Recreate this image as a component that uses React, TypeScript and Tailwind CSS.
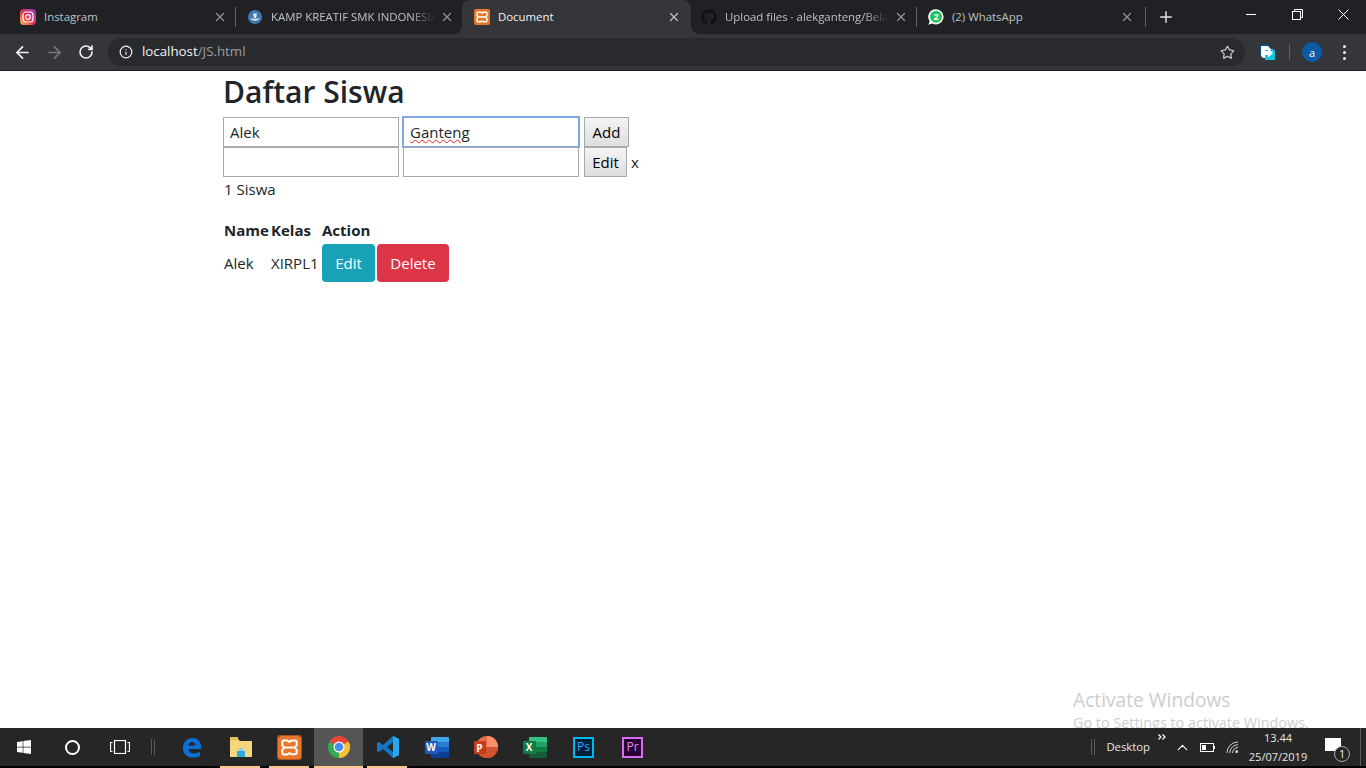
import { ArrowLeft, ArrowRight, RotateCw, Info, Star, X, Plus, ChevronUp } from "lucide-react";
import { FaGithub, FaWindows } from "react-icons/fa";

const Xampp = ({ size = 16 }: { size?: number }) => (
  <svg width={size} height={size} viewBox="0 0 16 16">
    <rect width="16" height="16" rx="2" fill="#e9772b" />
    <path
      d="M4 3.200h2.600l1.400.9 1.400-.9H12c.6 0 1 .4 1 1v2.200c0 .6-1.200 1-1.200 1.600s1.200 1 1.200 1.600v2.100c0 .6-.4 1-1 1H9.400L8 11.900l-1.400.9H4c-.6 0-1-.4-1-1V9.600C3 9 4.200 8.600 4.200 8S3 7 3 6.400V4.200c0-.6.4-1 1-1zM4.200 8h7.600"
      fill="none"
      stroke="#fff"
      strokeWidth="1.400"
      strokeLinejoin="round"
    />
  </svg>
);

const Tab = ({ title, icon, active, fade, left = 11, right = 8 }: { title: string; icon: React.ReactNode; active?: boolean; fade?: boolean; left?: number; right?: number }) => (
  <div
    className={`relative flex h-[34px] w-full items-center ${active ? "rounded-t-lg bg-[#35363a] text-[#f1f3f4]" : "text-[#bdc1c6]"}`}
    style={{ paddingLeft: left, paddingRight: right }}
  >
    {active && <div className="absolute bottom-0 -left-[8px] h-[8px] w-[8px] bg-[radial-gradient(circle_at_0_0,transparent_7.5px,#35363a_8px)]" />}
    {active && <div className="absolute bottom-0 -right-[8px] h-[8px] w-[8px] bg-[radial-gradient(circle_at_100%_0,transparent_7.5px,#35363a_8px)]" />}
    <div className="flex w-[16px] shrink-0 items-center justify-center">{icon}</div>
    <div className={`ml-[8px] w-[164px] overflow-hidden whitespace-nowrap text-[11.4px] leading-[16px] ${fade ? "[mask-image:linear-gradient(to_right,black_85%,transparent)]" : ""}`}>
      {title}
    </div>
    <X size={14} strokeWidth={2.2} className={`ml-auto shrink-0 ${active ? "text-[#bdc1c6]" : "text-[#8f9296]"}`} />
  </div>
);

const Sep = () => <div className="h-[20px] w-px shrink-0 bg-[#5f6368]" />;

function TabStrip() {
  return (
    <div className="flex h-[34px] items-center bg-[#202124]">
      <div className="w-[235px]">
        <Tab
          title="Instagram"
          left={20}
          icon={
            <svg width="16" height="16" viewBox="0 0 16 16">
              <defs>
                <linearGradient id="ig" x1="0" y1="1" x2="1" y2="0">
                  <stop offset="0" stopColor="#fdc04f" />
                  <stop offset="0.45" stopColor="#e8344f" />
                  <stop offset="1" stopColor="#8f3bc4" />
                </linearGradient>
              </defs>
              <rect width="16" height="16" rx="4" fill="url(#ig)" />
              <rect x="3" y="3" width="10" height="10" rx="3" fill="none" stroke="#fff" strokeWidth="1.2" />
              <circle cx="8" cy="8" r="2.3" fill="none" stroke="#fff" strokeWidth="1.2" />
            </svg>
          }
        />
      </div>
      <Sep />
      <div className="w-[226px]">
        <Tab
          title="KAMP KREATIF SMK INDONESIA"
          fade
          icon={
            <svg width="16" height="16" viewBox="0 0 16 16">
              <circle cx="8" cy="8" r="7" fill="#3f79b5" />
              <path d="M3.500 9c1 3.500 8 3.500 9 0l-2.500.7H6z" fill="#e6e6e6" />
              <path d="M6 4.500h4l-1 4.500H7z" fill="#dfe6ee" />
            </svg>
          }
        />
      </div>
      <div className="w-[229px]">
        <Tab title="Document" active left={12} right={10} icon={<Xampp />} />
      </div>
      <div className="w-[225px]">
        <Tab title="Upload files · alekganteng/Belajar" fade left={10} icon={<FaGithub size={16} className="text-[#111214]" />} />
      </div>
      <Sep />
      <div className="w-[228px]">
        <Tab
          title="(2) WhatsApp"
          right={11}
          icon={
            <svg width="16" height="16" viewBox="0 0 16 16">
              <path d="M8 .2a7.600 7.600 0 1 1-3.800 14.200L.4 15.800l1.300-3.600A7.600 7.600 0 0 1 8 .2z" fill="#fff" />
              <circle cx="8" cy="7.800" r="6" fill="#25c15f" />
              <text x="8" y="11" textAnchor="middle" fontSize="9" fontWeight="700" fill="#fff">
                2
              </text>
            </svg>
          }
        />
      </div>
      <Sep />
      <div className="flex h-[34px] w-[39px] items-center justify-center">
        <Plus size={18} strokeWidth={2} className="text-[#dee1e6]" />
      </div>
      <div className="ml-auto flex self-start text-white">
        <div className="flex h-[28px] w-[46px] items-center justify-center">
          <div className="h-px w-[10px] bg-white" />
        </div>
        <div className="flex h-[28px] w-[46px] items-center justify-center">
          <svg width="11" height="11" viewBox="0 0 11 11" fill="none" stroke="#fff">
            <rect x="0.5" y="2.5" width="8" height="8" />
            <path d="M2.500 2.500v-2h8v8h-2" />
          </svg>
        </div>
        <div className="flex h-[28px] w-[46px] items-center justify-center">
          <svg width="11" height="11" viewBox="0 0 11 11" stroke="#fff">
            <path d="M0.500 0.500l10 10M10.500 0.500l-10 10" />
          </svg>
        </div>
      </div>
    </div>
  );
}

function Toolbar() {
  return (
    <div className="flex h-[37px] items-center border-b border-[#1b1c1e] bg-[#35363a]">
      <div className="flex w-[108px] items-center pl-[13px]">
        <ArrowLeft size={19} strokeWidth={2.2} className="text-[#f1f3f4]" />
        <ArrowRight size={19} strokeWidth={2.2} className="ml-[13px] text-[#75787c]" />
        <RotateCw size={16} strokeWidth={2.4} className="ml-[14px] text-[#f1f3f4]" />
      </div>
      <div className="flex h-[28px] w-[1137px] items-center rounded-full bg-[#292a2d] pl-[11px] pr-[10px]">
        <Info size={14} strokeWidth={2} className="text-[#f1f3f4]" />
        <div className="ml-[9px] text-[13.3px] leading-none text-[#9aa0a6]">
          <span className="text-[#f1f3f4]">localhost</span>/JS.html
        </div>
        <Star size={15} strokeWidth={2} className="ml-auto text-[#c4c7c9]" />
      </div>
      <svg width="15" height="16" viewBox="0 0 15 16" className="ml-[15px]">
        <path d="M0 0h9v3H2v9H0z" fill="#0a4f7e" />
        <path d="M5 5h8l2 2v9H5z" fill="#14c4e4" />
        <path d="M1 2h7l3 3v1H5v8H3l-2-2z" fill="#fff" />
        <path d="M3 7h5V4.500L13 9l-5 4.500V11H3z" fill="#fff" />
      </svg>
      <div className="ml-[14px] h-[16px] w-px bg-[#5f6368]" />
      <div className="ml-[12px] flex h-[20px] w-[20px] items-center justify-center rounded-full bg-[#0b5aa5] text-[11px] leading-none text-white">
        a
      </div>
      <div className="ml-[21px] flex flex-col gap-[3px]">
        <div className="h-[3px] w-[3px] rounded-full bg-[#f1f3f4]" />
        <div className="h-[3px] w-[3px] rounded-full bg-[#f1f3f4]" />
        <div className="h-[3px] w-[3px] rounded-full bg-[#f1f3f4]" />
      </div>
    </div>
  );
}

function Page() {
  return (
    <main className="relative flex-1 overflow-hidden bg-white pl-[223px] text-[15px] text-[#212529]">
      <h1 className="h-[46px] pt-[1px] text-[30px] font-semibold leading-[40px]">Daftar Siswa</h1>
      <div className="flex h-[30px] items-center">
        <div className="flex h-[30px] w-[176px] items-center border border-[#a9a9a9] px-[6px]">Alek</div>
        <div className="ml-[4px] flex h-[30px] w-[176px] items-center border border-[#7ea6ea] px-[6px] shadow-[0_0_0_1px_#7ea6ea]">
          <span className="underline decoration-wavy decoration-[#e02020] decoration-1">Ganteng</span>
        </div>
        <button className="ml-[5px] h-[30px] w-[45px] border border-[#a9a9a9] bg-gradient-to-b from-[#f4f4f4] to-[#dedede] text-black">Add</button>
      </div>
      <div className="flex h-[30px] items-center">
        <div className="h-[30px] w-[176px] border border-[#a9a9a9]" />
        <div className="ml-[4px] h-[30px] w-[176px] border border-[#a9a9a9]" />
        <button className="ml-[5px] h-[30px] w-[43px] border border-[#a9a9a9] bg-gradient-to-b from-[#f4f4f4] to-[#dedede] text-black">Edit</button>
        <span className="ml-[4px]">x</span>
      </div>
      <p className="mt-[1px] pl-[1px] leading-[22px]">1 Siswa</p>
      <table className="mt-[16px]">
        <thead>
          <tr className="h-[28px] text-left font-bold">
            <th className="w-[47px] pl-[1px]">Name</th>
            <th className="w-[52px] pl-[1px]">Kelas</th>
            <th>Action</th>
          </tr>
        </thead>
        <tbody>
          <tr>
            <td className="pl-[1px]">Alek</td>
            <td className="pl-[1px]">XIRPL1</td>
            <td className="whitespace-nowrap">
              <div className="flex gap-[2px]">
                <button className="h-[38px] w-[53px] rounded-[4px] bg-[#17a2b8] text-white">Edit</button>
                <button className="h-[38px] w-[72px] rounded-[4px] bg-[#dc3545] text-white">Delete</button>
              </div>
            </td>
          </tr>
        </tbody>
      </table>
      <div className="absolute left-[1073px] top-[616px] whitespace-nowrap text-[#cdcdcd]">
        <div className="text-[19.2px] leading-[26px]">Activate Windows</div>
        <div className="text-[14.4px] leading-[20px]">Go to Settings to activate Windows.</div>
      </div>
    </main>
  );
}

const AppSlot = ({ children, open, active }: { children: React.ReactNode; open?: boolean; active?: boolean }) => (
  <div className={`relative flex h-[38px] w-[49px] items-center justify-center ${active ? "bg-[#555555]" : ""}`}>
    {children}
    {open && <div className={`absolute bottom-[-2px] h-[2px] bg-[#f6c78f] ${active ? "left-0 right-0" : "left-[4px] w-[40px]"}`} />}
  </div>
);

const Office = ({ letter, box, stripes }: { letter: string; box: string; stripes: string[] }) => (
  <div className="relative h-[21px] w-[24px]">
    <div className="absolute right-0 top-0 flex h-[21px] w-[18px] flex-col overflow-hidden rounded-[1px]">
      {stripes.map((c) => (
        <div key={c} className="flex-1" style={{ background: c }} />
      ))}
    </div>
    <div className="absolute left-0 top-[4px] flex h-[13px] w-[13px] items-center justify-center rounded-[1px] text-[10px] font-bold leading-none text-white" style={{ background: box }}>
      {letter}
    </div>
  </div>
);

function Taskbar() {
  return (
    <div className="h-[40px] bg-black">
      <div className="flex h-[38px] items-center bg-[#262626] text-white">
        <div className="flex w-[48px] justify-center">
          <FaWindows size={16} />
        </div>
        <div className="flex w-[48px] justify-center">
          <div className="h-[15px] w-[15px] rounded-full border-2 border-white" />
        </div>
        <div className="flex w-[48px] justify-center">
          <svg width="20" height="14" viewBox="0 0 20 14" fill="none" stroke="#fff" strokeWidth="1.2">
            <rect x="4.500" y="0.5" width="11" height="13" />
            <path d="M2.500 2.500H.5v9h2M17.500 2.500h2v9h-2" />
          </svg>
        </div>
        <div className="ml-[7px] mr-[12px] flex gap-[2px]">
          <div className="h-[16px] w-px bg-[#5a5a5a]" />
          <div className="h-[16px] w-px bg-[#5a5a5a]" />
        </div>
        <AppSlot>
          <svg width="22" height="22" viewBox="0 0 22 22">
            <path d="M2 12C2 6 6 2 12 2c5 0 8 4 8 9v2H7.500c.3 3 2.700 4.500 5.500 4.500 2 0 4-.5 6-1.700V20c-2 1.200-4 1.600-6.500 1.600C6 21.600 2 18 2 12zm5.500-2.500h7c0-2-1.500-3.500-3.500-3.500S7.500 7.500 7.500 9.500z" fill="#0a6fd6" />
          </svg>
        </AppSlot>
        <AppSlot open>
          <svg width="22" height="20" viewBox="0 0 22 20">
            <path d="M0 2h8l2 2h12v16H0z" fill="#f5d67a" />
            <rect x="0" y="0" width="8" height="3" fill="#e8bf54" />
            <path d="M7 14h8v6H7z" fill="#2fa8df" />
            <path d="M9 11h4v3H9z" fill="#7fd0f2" />
          </svg>
        </AppSlot>
        <AppSlot open>
          <div className="rounded-[2px] ring-1 ring-[#a8561e]">
            <Xampp size={23} />
          </div>
        </AppSlot>
        <AppSlot open active>
          <svg width="22" height="22" viewBox="0 0 22 22">
            <path d="M11 11 1.470 5.500A11 11 0 0 1 20.530 5.500z" fill="#e8453c" />
            <path d="M11 11 20.530 5.500A11 11 0 0 1 11 22z" fill="#fbc02d" />
            <path d="M11 11 11 22A11 11 0 0 1 1.470 5.500z" fill="#34a853" />
            <circle cx="11" cy="11" r="5.500" fill="#fff" />
            <circle cx="11" cy="11" r="4.300" fill="#4a8cf0" />
          </svg>
        </AppSlot>
        <AppSlot open>
          <svg width="24" height="24" viewBox="0 0 24 24">
            <path d="M17 1l6 3v16l-6 3-10-9-4 3-2-1V8l2-1 4 3z" fill="#1577c2" />
            <path d="M17 1l6 3v16l-6 3z" fill="#27a7ee" />
            <path d="M17 7l-6 5 6 5z" fill="#262626" />
          </svg>
        </AppSlot>
        <AppSlot>
          <Office letter="W" box="#1f5bbf" stripes={["#41a5ee", "#2b7cd3", "#185abd", "#103f91"]} />
        </AppSlot>
        <AppSlot>
          <div className="relative h-[22px] w-[24px]">
            <svg width="22" height="22" viewBox="0 0 22 22" className="absolute right-0 top-0">
              <circle cx="11" cy="11" r="11" fill="#ed6c47" />
              <path d="M11 0a11 11 0 0 1 11 11H11z" fill="#ff8f6b" />
              <path d="M0 11h22a11 11 0 0 1-22 0z" fill="#d35230" />
            </svg>
            <div className="absolute left-0 top-[5px] flex h-[13px] w-[12px] items-center justify-center rounded-[1px] bg-[#c43e1c] text-[10px] font-bold leading-none text-white">
              P
            </div>
          </div>
        </AppSlot>
        <AppSlot>
          <Office letter="X" box="#107c41" stripes={["#33c481", "#21a366", "#107c41", "#185c37"]} />
        </AppSlot>
        <AppSlot>
          <div className="flex h-[21px] w-[21px] items-center justify-center border-2 border-[#00b8f0] bg-[#001e36] text-[12px] leading-none text-[#31a8ff]">
            Ps
          </div>
        </AppSlot>
        <AppSlot>
          <div className="flex h-[21px] w-[21px] items-center justify-center border-2 border-[#d86cf0] bg-[#2a0034] text-[12px] leading-none text-[#e08cf5]">
            Pr
          </div>
        </AppSlot>
        <div className="ml-auto flex h-full items-center text-[11.3px] text-[#e6e6e6]">
          <div className="flex gap-[2px]">
            <div className="h-[16px] w-px bg-[#5a5a5a]" />
            <div className="h-[16px] w-px bg-[#5a5a5a]" />
          </div>
          <span className="ml-[11px]">Desktop</span>
          <svg width="8" height="6" viewBox="0 0 8 6" fill="none" stroke="#fff" strokeWidth="1.200" className="mb-[20px] ml-[8px]">
            <path d="M.5.5 3 3 .5 5.500M4.500.5 7 3 4.500 5.500" />
          </svg>
          <ChevronUp size={17} strokeWidth={1.6} className="ml-[8px] text-white" />
          <svg width="15" height="9" viewBox="0 0 15 9" fill="none" stroke="#fff" className="ml-[9px]">
            <rect x="0.5" y="0.5" width="13" height="8" />
            <rect x="2" y="2" width="4" height="5" fill="#fff" stroke="none" />
            <rect x="14" y="3" width="1" height="3" fill="#fff" stroke="none" />
          </svg>
          <svg width="13" height="13" viewBox="0 0 14 14" fill="none" stroke="#ddd" strokeWidth="1" className="ml-[11px]">
            <path d="M1 13A12 12 0 0 1 13 1M4 13A9 9 0 0 1 13 4M7 13a6 6 0 0 1 6-6" />
            <circle cx="11.500" cy="11.500" r="1.500" fill="#ddd" stroke="none" />
          </svg>
          <div className="ml-[7px] w-[64px] text-center text-[11px] leading-[19px]">
            <div>13.44</div>
            <div>25/07/2019</div>
          </div>
          <div className="relative ml-[15px] h-[18px] w-[18px]">
            <div className="h-[13px] w-[16px] bg-white" />
            <div className="absolute -bottom-[6px] -right-[7px] flex h-[16px] w-[16px] items-center justify-center rounded-full border border-[#aaaaaa] bg-[#262626] text-[10px] leading-none text-white">
              1
            </div>
          </div>
          <div className="ml-[17px] mr-[5px] h-full w-px bg-[#5a5a5a]" />
        </div>
      </div>
    </div>
  );
}

export default function App() {
  return (
    <div className="flex h-screen flex-col overflow-hidden bg-white font-['Open_Sans',sans-serif]">
      <TabStrip />
      <Toolbar />
      <Page />
      <Taskbar />
    </div>
  );
}
